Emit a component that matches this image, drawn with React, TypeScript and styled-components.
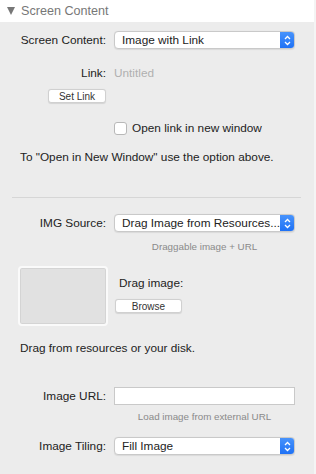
import styled, { createGlobalStyle } from "styled-components";

const GlobalStyle = createGlobalStyle`
  html, body {
    margin: 0;
    padding: 0;
    background: #ececec;
  }
  body {
    font-family: "Liberation Sans", Arial, sans-serif;
    font-size: 11.8px;
    line-height: 15px;
    color: #222;
  }
`

const Panel = styled.div`
  width: 316px;
  height: 474px;
  background: #ececec;
  overflow: hidden;
  box-sizing: border-box;
  border-right: 2px solid #f4f4f4;
`

const Header = styled.div`
  height: 22px;
  background: #fff;
  display: flex;
  align-items: center;
  padding-left: 7px;
  gap: 4px;
  color: #777;
  font-size: 12.6px;
`

const Triangle = styled.span`
  width: 0;
  height: 0;
  border-left: 4.5px solid transparent;
  border-right: 4.5px solid transparent;
  border-top: 8px solid #777;
  margin-right: 2px;
`

const Body = styled.div`
  display: flex;
  flex-direction: column;
`

interface RowProps {
  top: number;
}

const Row = styled.div<RowProps>`
  display: grid;
  grid-template-columns: 106px 181px;
  column-gap: 8px;
  align-items: center;
  margin-top: ${(p) => p.top}px;
`

const Label = styled.div`
  text-align: right;
  white-space: nowrap;
`

const ButtonCell = styled.div`
  display: flex;
  justify-content: flex-end;
`

const SelectBox = styled.div`
  height: 18px;
  box-sizing: border-box;
  background: #fff;
  border: 1px solid #c9c9c9;
  border-radius: 4px;
  display: flex;
  align-items: center;
  justify-content: space-between;
  padding-left: 7px;
  overflow: hidden;
  white-space: nowrap;
  box-shadow: 0 0.5px 1px rgba(0, 0, 0, 0.08);
`

const Stepper = styled.div`
  width: 15px;
  height: 18px;
  flex-shrink: 0;
  margin-right: -1px;
  background: linear-gradient(#4a95fc, #1c6ff5);
  border-radius: 0 4px 4px 0;
  display: flex;
  align-items: center;
  justify-content: center;
`

const Muted = styled.div`
  color: #b0b0b0;
`

interface BtnProps {
  w: number;
}

const Button = styled.div<BtnProps>`
  width: ${(p) => p.w}px;
  height: 14px;
  box-sizing: border-box;
  background: #fff;
  border: 1px solid #d0d0d0;
  border-radius: 3px;
  font-size: 10px;
  color: #333;
  display: flex;
  align-items: center;
  justify-content: center;
  box-shadow: 0 0.5px 1px rgba(0, 0, 0, 0.1);
`

const CheckRow = styled.label`
  display: flex;
  align-items: center;
  gap: 5px;
`

const CheckBox = styled.span`
  width: 13px;
  height: 13px;
  box-sizing: border-box;
  background: #fff;
  border: 1px solid #b8b8b8;
  border-radius: 3px;
`

interface TextProps {
  top: number;
}

const Note = styled.div<TextProps>`
  margin-top: ${(p) => p.top}px;
  padding-left: 20px;
`

const Divider = styled.div`
  margin: 32px 13px 0 12px;
  height: 1px;
  background: #d6d6d6;
`

const Hint = styled.div<TextProps>`
  margin-top: ${(p) => p.top}px;
  margin-left: 114px;
  width: 181px;
  text-align: center;
  font-size: 9.8px;
  line-height: 11px;
  color: #8a8a8a;
`

const DragArea = styled.div`
  margin-top: 14px;
  display: flex;
  align-items: flex-start;
`

const Well = styled.div`
  margin-left: 18px;
  width: 90px;
  height: 60px;
  box-sizing: border-box;
  border: 2px solid #fafafa;
  border-radius: 4px;
  background: #e1e1e1;
  box-shadow: inset 0 0 0 1px #d4d4d4;
`

const DragSide = styled.div`
  margin-left: 7px;
  padding-top: 10px;
  display: flex;
  flex-direction: column;
  gap: 8px;
`

const DragLabel = styled.div`
  padding-left: 4px;
`

const TextInput = styled.div`
  height: 18px;
  box-sizing: border-box;
  background: #fff;
  border: 1px solid #c9c9c9;
`

const Chevrons = () => (
  <svg width="7" height="11" viewBox="0 0 7 11">
    <path d="M1 4 L3.5 1.5 L6 4 M1 7 L3.5 9.5 L6 7" fill="none" stroke="#fff" strokeWidth="1.3" />
  </svg>
)

const Select = ({ value }: { value: string }) => (
  <SelectBox>
    <span>{value}</span>
    <Stepper>
      <Chevrons />
    </Stepper>
  </SelectBox>
)

const App = () => {
  return (
    <>
      <GlobalStyle />
      <Panel>
        <Header>
          <Triangle />
          Screen Content
        </Header>
        <Body>
          <Row top={9}>
            <Label>Screen Content:</Label>
            <Select value="Image with Link" />
          </Row>
          <Row top={17}>
            <Label>Link:</Label>
            <Muted>Untitled</Muted>
          </Row>
          <Row top={8}>
            <ButtonCell>
              <Button w={58}>Set Link</Button>
            </ButtonCell>
          </Row>
          <Row top={18}>
            <div />
            <CheckRow>
              <CheckBox />
              Open link in new window
            </CheckRow>
          </Row>
          <Note top={14}>To "Open in New Window" use the option above.</Note>
          <Divider />
          <Row top={16}>
            <Label>IMG Source:</Label>
            <Select value="Drag Image from Resources..." />
          </Row>
          <Hint top={9}>Draggable image + URL</Hint>
          <DragArea>
            <Well />
            <DragSide>
              <DragLabel>Drag image:</DragLabel>
              <Button w={67}>Browse</Button>
            </DragSide>
          </DragArea>
          <Note top={15}>Drag from resources or your disk.</Note>
          <Row top={31}>
            <Label>Image URL:</Label>
            <TextInput />
          </Row>
          <Hint top={6}>Load image from external URL</Hint>
          <Row top={15}>
            <Label>Image Tiling:</Label>
            <Select value="Fill Image" />
          </Row>
        </Body>
      </Panel>
    </>
  )
}

export default App
